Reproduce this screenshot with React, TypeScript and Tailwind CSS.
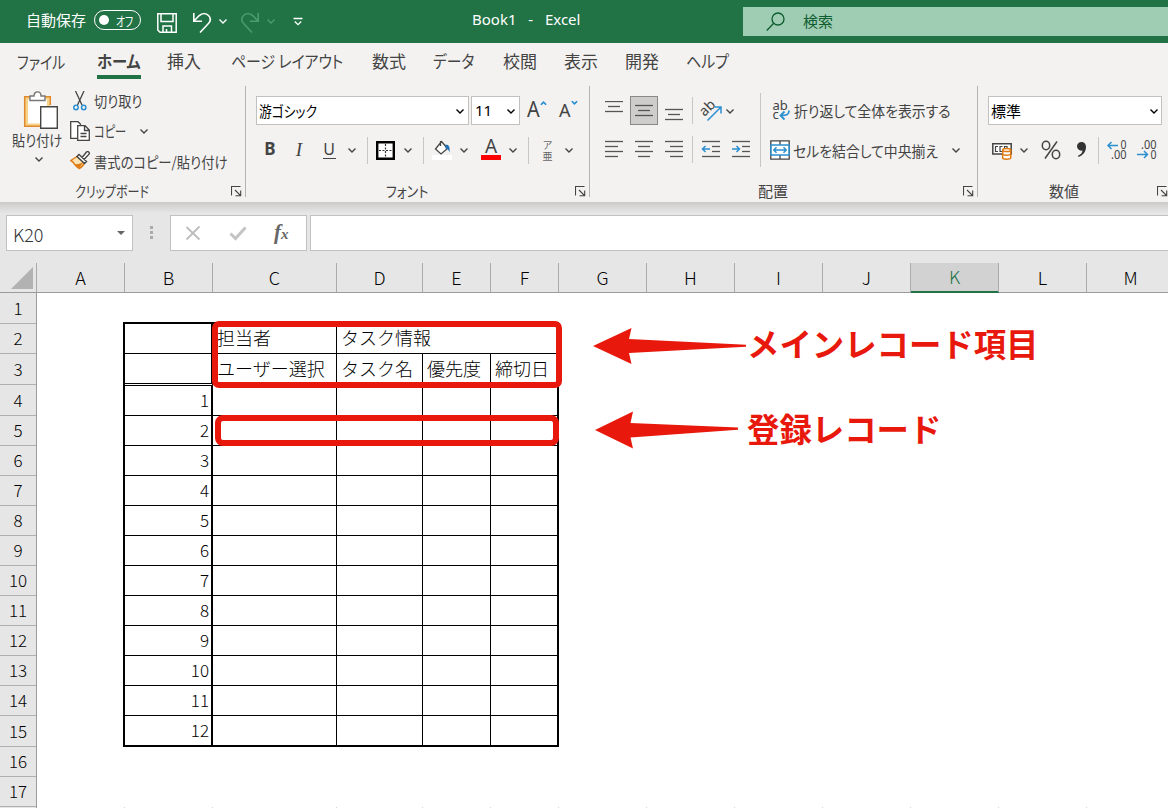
import { clsx } from 'clsx';

const columns = [
  { name: 'A', width: 'w-[88px]' },
  { name: 'B', width: 'w-[88px]' },
  { name: 'C', width: 'w-[124px]' },
  { name: 'D', width: 'w-[86px]' },
  { name: 'E', width: 'w-[68px]' },
  { name: 'F', width: 'w-[68px]' },
  { name: 'G', width: 'w-[88px]' },
  { name: 'H', width: 'w-[88px]' },
  { name: 'I', width: 'w-[88px]' },
  { name: 'J', width: 'w-[88px]' },
  { name: 'K', width: 'w-[88px]' },
  { name: 'L', width: 'w-[88px]' },
  { name: 'M', width: 'w-[88px]' },
];

const tallRows = [1, 3, 4, 15];

const tabs = [
  { name: 'ファイル', box: 'ml-[17px] w-[80px]', text: 'pt-px scale-x-[0.82]' },
  { name: 'ホーム', box: 'w-[70px]', text: 'font-bold scale-x-[0.9]', active: true },
  { name: '挿入', box: 'w-[64px]', text: '' },
  { name: 'ページ レイアウト', box: 'w-[141px]', text: 'scale-x-[0.875]' },
  { name: '数式', box: 'w-[61px]', text: '' },
  { name: 'データ', box: 'w-[70px]', text: 'scale-x-[0.87]' },
  { name: '校閲', box: 'w-[61px]', text: '' },
  { name: '表示', box: 'w-[61px]', text: '' },
  { name: '開発', box: 'w-[61px]', text: '' },
  { name: 'ヘルプ', box: 'w-[60px]', text: 'scale-x-[0.88]' },
];

function Chevron({ className = '' }: { className?: string }) {
  return (
    <svg viewBox="0 0 16 16" className={clsx('w-4 h-4 shrink-0', className)} fill="none" stroke="currentColor" strokeWidth="1.4">
      <path d="M4.5 6.5 8 10l3.5-3.5" />
    </svg>
  );
}

function Sep({ className = 'h-[27px]' }: { className?: string }) {
  return <div className={clsx('w-px bg-[#c8c6c4] shrink-0', className)} />;
}

function Launcher() {
  return (
    <svg viewBox="0 0 11 11" className="mt-[3px] w-[11px] h-[11px] shrink-0" fill="none" stroke="#444" strokeWidth="1.1">
      <path d="M.5 9.5v-9h9M4 4l5.5 5.5M9.7 4.5v5.2H4.5" />
    </svg>
  );
}

// lines: [x1, x2, y]
function Lines({ lines, children }: { lines: number[][]; children?: any }) {
  return (
    <svg viewBox="0 0 20 20" className="w-5 h-5 shrink-0" fill="none" stroke="#555" strokeWidth="1.3">
      {lines.map(([a, b, y], i) => (
        <path key={i} d={`M${a} ${y}H${b}`} />
      ))}
      {children}
    </svg>
  );
}

function TitleBar() {
  return (
    <div className="h-[43px] bg-[#217346] text-white flex items-start text-[15px] leading-none">
      <span className="ml-[26px] mt-[12px] w-[68px]">自動保存</span>
      <div className="mt-[10px] w-[47px] h-5 rounded-full border border-white flex items-center">
        <div className="ml-[4px] w-[10px] h-[10px] rounded-full bg-white" />
        <span className="ml-[7px] w-[20px] whitespace-nowrap text-[13px] origin-left scale-x-[0.75] [font-feature-settings:'palt']">オフ</span>
      </div>
      <svg viewBox="0 0 20 20" className="ml-4 mt-[13px] w-5 h-5" fill="none" stroke="white" strokeWidth="1.5">
        <path d="M.8.8h18.400v18.400H3L.8 17zM4 1v7.500h12V1M6 19v-6h8.500v6M9.500 19v-3" />
      </svg>
      <svg viewBox="0 0 20 20" className="ml-[15px] mt-[13px] w-5 h-5" fill="none" stroke="white" strokeWidth="1.6">
        <path d="M1.800 0v8.200H10M2 8l5-5.200C10 .2 14 0 16.500 2.500c2.700 2.700 2 6-.5 8.500L8 19.500" />
      </svg>
      <Chevron className="ml-[3px] mt-[13px]" />
      <svg viewBox="0 0 20 20" className="ml-[9px] mt-[13px] w-5 h-5" fill="none" stroke="#4d9a70" strokeWidth="1.6">
        <path d="M18.200 0v8.200H10M18 8l-5-5.200C10 .2 6 0 3.500 2.500c-2.700 2.700-2 6 .5 8.500L12 19.500" />
      </svg>
      <Chevron className="ml-[3px] mt-[13px] text-[#4d9a70]" />
      <svg viewBox="0 0 10 10" className="ml-[14px] mt-[17px] w-[10px] h-[10px]" fill="none" stroke="white" strokeWidth="1.3">
        <path d="M.5 1.500h9M1.800 4.500 5 7.700l3.200-3.200" />
      </svg>
      <span className="ml-[169px] mt-[12px] w-[271px] font-['Noto_Sans'] text-[15px] whitespace-pre [word-spacing:2px]">Book1  -  Excel</span>
      <div className="mt-[7px] flex-1 h-[29px] bg-[#9fcdb3] text-[#0e5c2f] flex items-center">
        <svg viewBox="0 0 20 20" className="ml-[23px] w-5 h-5" fill="none" stroke="currentColor" strokeWidth="1.3">
          <circle cx="12" cy="7" r="6" />
          <path d="M7.700 11.300.8 18.500" />
        </svg>
        <span className="ml-[17px] -mt-[2px]">検索</span>
      </div>
    </div>
  );
}

function Tabs() {
  return (
    <div className="h-[37px] flex text-[17px] leading-none text-[#444] [font-feature-settings:'palt']">
      {tabs.map((tab) => (
        <div key={tab.name} className={clsx('pt-[9px] shrink-0', tab.box)}>
          <div className={clsx('h-[18px] whitespace-nowrap origin-left', tab.text)}>{tab.name}</div>
          {tab.active && <div className="mt-[5px] w-11 h-1 bg-[#217346]" />}
        </div>
      ))}
    </div>
  );
}

function ClipboardGroup() {
  return (
    <div className="w-[245px] shrink-0">
      <div className="h-[94px] flex">
        <div className="ml-[12px] mt-[5px] w-[58px]">
          <svg viewBox="0 0 36 38" className="ml-[11px] w-9 h-[38px]" fill="none">
            <path d="M3.500 7h22v27h-22z" fill="#fff" stroke="#f8d28a" strokeWidth="3" />
            <path d="M8 5.700H1.700v29.500H18M21 5.700h6.300V14" stroke="#e08a2c" strokeWidth="1.500" />
            <path d="M7 9.500V5h4c0-5.500 7-5.500 7 0h4v4.500z" fill="#fff" stroke="#777" strokeWidth="1.400" />
            <path d="M17.700 15.700h16.600v21.600H17.700z" fill="#fff" stroke="#444" strokeWidth="1.400" />
          </svg>
          <div className="mt-[3px] whitespace-nowrap origin-left scale-x-[0.88]">貼り付け</div>
          <Chevron className="ml-[19px] mt-[4px]" />
        </div>
        <div>
          <div className="h-[30px] flex items-center">
            <svg viewBox="0 0 20 20" className="w-5 h-5" fill="none" strokeWidth="1.300">
              <path d="M5.500 0l6.500 14M14 0 7.500 14" stroke="#444" />
              <circle cx="6" cy="16.500" r="2.200" stroke="#2b8fd0" strokeWidth="1.500" />
              <circle cx="13.700" cy="16.500" r="2.200" stroke="#2b8fd0" strokeWidth="1.500" />
            </svg>
            <span className="ml-[4px] -mt-px origin-left scale-x-[0.88]">切り取り</span>
          </div>
          <div className="h-[30px] flex items-center">
            <svg viewBox="0 0 20 20" className="w-5 h-5" fill="#fff" stroke="#444" strokeWidth="1.300">
              <path d="M7 17.300H.7V.7H8l3 3" />
              <path d="M7.700 4.700H15l4.300 4.300v10.300H7.700zM14.500 5v4.500H19M10.500 12.500h6M10.500 15.500h6" />
            </svg>
            <span className="ml-[4px] -mt-px w-[42px] whitespace-nowrap origin-left scale-x-[0.75]">コピー</span>
            <Chevron />
          </div>
          <div className="h-[30px] flex items-center">
            <svg viewBox="0 0 20 20" className="w-5 h-5" fill="none" strokeWidth="1.400">
              <path d="M7 5.500.8 9.500c2 1 3 2 3.500 3.500 1.500 2 3 3.500 5 4.500 2-1 4.500-4 5-6z" fill="#fbe3b5" stroke="#e07a12" />
              <path d="M4.500 13c4 .5 6-.5 9-2l-4.500 6z" fill="#e07a12" />
              <path d="M7 5.500 9 3.500l7.500 7L14.500 12.500zM12 6.500 16.500 1c1.500-1.200 3.500.5 2.500 2.200L14 8.500" fill="#fff" stroke="#444" />
            </svg>
            <span className="ml-[4px] whitespace-nowrap origin-left scale-x-[0.887]">書式のコピー/貼り付け</span>
          </div>
        </div>
      </div>
      <div className="h-5 flex items-center">
        <span className="ml-[75px] w-[156px] origin-left scale-x-[0.8]">クリップボード</span>
        <Launcher />
      </div>
    </div>
  );
}

function FontGroup() {
  return (
    <div className="w-[343px] shrink-0 pt-[10px]">
      <div className="h-[29px] flex">
        <div className="ml-[10px] w-[213px] border border-[#c3c1bf] bg-white text-black flex items-center pl-[2px]">
          <span className="w-[195px] origin-left scale-x-[0.85]">游ゴシック</span>
          <Chevron className="-ml-px" />
        </div>
        <div className="ml-[2px] w-[49px] border border-[#c3c1bf] bg-white text-black flex items-center pl-[3px]">
          <span className="flex-1 font-['Noto_Sans'] text-[15px]">11</span>
          <Chevron />
        </div>
        <div className="ml-[7px] w-8 flex font-['Noto_Sans'] text-[22px] leading-[25px]">
          <span className="scale-x-90 origin-left">A</span>
          <svg viewBox="0 0 8 6" className="-ml-[1px] mt-[4px] w-[7px] h-[6px]" fill="none" stroke="#2b8fd0" strokeWidth="2">
            <path d="m1 5 3-3 3 3" />
          </svg>
        </div>
        <div className="w-6 flex font-['Noto_Sans'] text-[18px] leading-[28px]">
          <span>A</span>
          <svg viewBox="0 0 8 6" className="mt-[4px] w-[7px] h-[6px]" fill="none" stroke="#2b8fd0" strokeWidth="2">
            <path d="m1 1 3 3 3-3" />
          </svg>
        </div>
      </div>
      <div className="mt-[10px] h-[30px] flex items-center font-['Noto_Sans'] text-[18px]">
        <b className="ml-[10px] w-7 text-center text-[17px] -mt-[3px]">B</b>
        <i className="w-[30px] text-center font-['Liberation_Serif'] text-[19px] -mt-px">I</i>
        <div className="w-[30px] flex justify-center">
          <span className="w-[13px] h-[18px] -mt-px text-center text-[16px] leading-[16px] border-b border-[#444]">U</span>
        </div>
        <Chevron />
        <Sep className="ml-[7px] h-[27px]" />
        <svg viewBox="0 0 19 19" className="ml-2 w-[19px] h-[19px]">
          <path d="M1.200 1.200h16.600v16.600H1.200z" fill="#fff" stroke="#000" strokeWidth="2.400" />
          <path d="M9.500 3v13M3 9.500h13" stroke="#333" strokeWidth="1.200" strokeDasharray="2 1.500" />
        </svg>
        <Chevron className="ml-[5px]" />
        <Sep className="ml-[7px] h-[27px]" />
        <svg viewBox="0 0 20 20" className="ml-2 w-5 h-5" fill="none">
          <path d="M8.500 1v5M9.500 1.500 15.500 8.500 9 14 3.500 9z" fill="#fff" stroke="#444" strokeWidth="1.300" />
          <path d="M13.500 4.500c4 0 4.500 3.500 4 8-1-3-2-4-4-4z" fill="#1e6fb5" />
          <path d="M0 15h20v5H0z" fill="#fff" />
        </svg>
        <Chevron className="ml-1" />
        <div className="ml-[9px] w-5 h-5 border-b-[5px] border-[#f00] flex justify-center items-center">
          <span className="leading-none text-[19px] mb-[3px]">A</span>
        </div>
        <Chevron className="ml-1" />
        <Sep className="ml-[7px] h-[27px]" />
        <div className="ml-[11px] w-[15px] -mt-px text-[10px] leading-[11px] text-center text-[#666] font-['Noto_Sans_CJK_JP']">
          ア<br />亜
        </div>
        <Chevron className="ml-[6px]" />
      </div>
      <div className="mt-[15px] h-5 flex items-center">
        <span className="ml-[140px] w-[189px] origin-left scale-x-[0.86]">フォント</span>
        <Launcher />
      </div>
    </div>
  );
}

function AlignGroup() {
  return (
    <div className="w-[387px] shrink-0 pt-[7px]">
      <div className="h-[74px] flex">
        <div className="w-[170px] pt-[3px]">
          <div className="h-[29px] flex items-center">
            <div className="ml-[14px] w-[26px]">
              <Lines lines={[[1, 19, 0.5], [4, 16, 5.5], [1, 19, 10.5]]} />
            </div>
            <div className="w-7 h-[29px] bg-[#cfcdcb] border border-[#8a8886] flex justify-center items-center">
              <Lines lines={[[1, 19, 4.5], [4, 16, 9.5], [1, 19, 14.5]]} />
            </div>
            <div className="ml-[6px]">
              <Lines lines={[[1, 19, 8.5], [4, 16, 13.5], [1, 19, 18.5]]} />
            </div>
            <Sep className="ml-[8px] h-[27px]" />
            <svg viewBox="0 0 22 22" className="ml-[8px] w-[22px] h-[22px] overflow-visible" fill="none" stroke="#2b8fd0" strokeWidth="1.500">
              <text x="-1" y="14" transform="rotate(-45 5 10)" fontSize="14" fontFamily="Noto Sans" fill="#444" stroke="none">ab</text>
              <path d="M6.500 20.500 19.500 7.500M13.500 7h6.500v6.500" />
            </svg>
            <Chevron className="-ml-[1px]" />
          </div>
          <div className="mt-[9px] h-[30px] flex items-center">
            <div className="ml-[14px] flex gap-[10px]">
              <Lines lines={[[1, 19, 2.5], [1, 14, 7.5], [1, 19, 12.5], [1, 14, 17.5]]} />
              <Lines lines={[[1, 19, 2.5], [4, 16, 7.5], [1, 19, 12.5], [4, 16, 17.5]]} />
              <Lines lines={[[1, 19, 2.5], [6, 19, 7.5], [1, 19, 12.5], [6, 19, 17.5]]} />
            </div>
            <Sep className="ml-[8px] h-[27px]" />
            <div className="ml-[8px] flex gap-[10px]">
              <Lines lines={[[1, 19, 2.5], [11, 19, 7.5], [11, 19, 12.5], [1, 19, 17.5]]}>
                <path d="M1.500 10H9M4.500 7l-3 3 3 3" stroke="#2b8fd0" strokeWidth="1.500" />
              </Lines>
              <Lines lines={[[1, 19, 2.5], [11, 19, 7.5], [11, 19, 12.5], [1, 19, 17.5]]}>
                <path d="M1 10h7.500M5.500 7l3 3-3 3" stroke="#2b8fd0" strokeWidth="1.500" />
              </Lines>
            </div>
          </div>
        </div>
        <Sep className="h-[74px]" />
        <div className="pt-[3px]">
          <div className="h-[29px] flex items-center">
            <svg viewBox="0 0 20 20" className="ml-[11px] w-5 h-5 overflow-visible" fill="none" stroke="#2b8fd0" strokeWidth="1.800">
              <text x="0.500" y="8.500" fontSize="13" fontFamily="Noto Sans" fill="#444" stroke="none">ab</text>
              <text x="0.500" y="18" fontSize="13" fontFamily="Noto Sans" fill="#444" stroke="none">c</text>
              <path d="M17 9.500c0 4-2 5-8 5M12.500 10.500l-4 4 4 4" />
            </svg>
            <span className="ml-[2px] whitespace-nowrap origin-left scale-x-[0.925]">折り返して全体を表示する</span>
          </div>
          <div className="mt-[10px] h-[30px] flex items-center">
            <svg viewBox="0 0 20 20" className="ml-[9px] w-5 h-5" fill="none">
              <path d="M.8.800h18.400v18.400H.8zM10 1v4M10 15v4" fill="#fff" stroke="#444" strokeWidth="1.300" />
              <path d="M1 5h18v10H1z" fill="#fff" stroke="#2b8fd0" strokeWidth="1.500" />
              <path d="M4 10h12M6.500 7.300 3.800 10l2.700 2.700M13.500 7.300l2.700 2.700-2.700 2.700" stroke="#2b8fd0" strokeWidth="1.500" />
            </svg>
            <span className="ml-[3px] w-[155px] whitespace-nowrap origin-left scale-x-[0.925]">セルを結合して中央揃え</span>
            <Chevron />
          </div>
        </div>
      </div>
      <div className="mt-[13px] h-5 flex items-center">
        <span className="ml-[168px] w-[205px]">配置</span>
        <Launcher />
      </div>
    </div>
  );
}

function NumberGroup() {
  return (
    <div className="w-[190px] shrink-0 pt-[10px]">
      <div className="ml-[10px] w-[174px] h-[29px] border border-[#c3c1bf] bg-white text-black flex items-center pl-[2px]">
        <span className="flex-1">標準</span>
        <Chevron className="-mr-[1px]" />
      </div>
      <div className="mt-[10px] h-[30px] flex items-center">
        <svg viewBox="0 0 20 20" className="ml-[14px] w-5 h-5" fill="none" stroke="#444" strokeWidth="1.500">
          <path d="M.8 3.800h18.400V14H.8z" fill="#fff" />
          <path d="M6 6.500H3.500v5H6M10.500 6.500H8v5h2M12.500 8.500v-2H15v2" strokeWidth="1.200" />
          <path d="M10.700 10v8c0 1.600 8 1.600 8 0v-8" fill="#fff" stroke="#e07a12" />
          <ellipse cx="14.700" cy="10" rx="4" ry="1.600" fill="#fff" stroke="#e07a12" />
          <path d="M10.700 14c0 1.600 8 1.600 8 0" stroke="#e07a12" />
        </svg>
        <Chevron className="ml-[4px]" />
        <svg viewBox="0 0 20 20" className="ml-[9px] w-5 h-5" fill="none" stroke="#444" strokeWidth="1.500">
          <ellipse cx="5" cy="5.500" rx="3.700" ry="4.200" />
          <ellipse cx="15" cy="14.500" rx="3.700" ry="4.200" />
          <path d="M16 1.500 4 18.500" />
        </svg>
        <svg viewBox="0 0 12 18" className="ml-[15px] w-3 h-[18px]" fill="#333">
          <path d="M5.500 1C8.500 1 10 3.300 10 6c0 4.500-3 8.500-7.500 10l-.5-1.200c2.500-1 4.300-3 4.500-5.300C3.500 10.300 1 8 1 5.300 1 2.800 3 1 5.500 1z" />
        </svg>
        <Sep className="ml-[10px] h-[27px]" />
        <svg viewBox="0 0 20 20" className="ml-[8px] w-5 h-5 overflow-visible" fill="none" stroke="#2b8fd0" strokeWidth="1.500">
          <text x="13.500" y="9" fontSize="12" textLength="6" lengthAdjust="spacingAndGlyphs" fontFamily="Noto Sans" fill="#444" stroke="none">0</text>
          <text x="4" y="19" fontSize="12" textLength="15.500" lengthAdjust="spacingAndGlyphs" fontFamily="Noto Sans" fill="#444" stroke="none">.00</text>
          <path d="M1 5.500h10M4.500 2 1 5.500 4.500 9" />
        </svg>
        <svg viewBox="0 0 20 20" className="ml-[10px] w-5 h-5 overflow-visible" fill="none" stroke="#2b8fd0" strokeWidth="1.500">
          <text x="4" y="9" fontSize="12" textLength="15.500" lengthAdjust="spacingAndGlyphs" fontFamily="Noto Sans" fill="#444" stroke="none">.00</text>
          <text x="13.500" y="19" fontSize="12" textLength="6" lengthAdjust="spacingAndGlyphs" fontFamily="Noto Sans" fill="#444" stroke="none">0</text>
          <path d="M0 14.500h10.500M7 11l3.500 3.500L7 18" />
        </svg>
      </div>
      <div className="mt-[15px] h-5 flex items-center">
        <span className="ml-[71px] w-[108px]">数値</span>
        <Launcher />
      </div>
    </div>
  );
}

function Ribbon() {
  const line = <div className="w-px h-[111px] bg-[#b5b3b1] shrink-0" />;
  return (
    <div className="h-[122px] pt-[6px] flex text-[15px] leading-none text-[#444] [font-feature-settings:'palt']">
      <ClipboardGroup />
      {line}
      <FontGroup />
      {line}
      <AlignGroup />
      {line}
      <NumberGroup />
    </div>
  );
}

function FormulaBar() {
  return (
    <div className="h-[61px] border-t-2 border-[#cfcdcb] bg-linear-to-b from-[#d2d0ce] to-[#e6e6e6] to-[9px] pt-[11px] flex">
      <div className="ml-[6px] w-[127px] h-9 bg-white border border-[#c3c1bf] flex items-center">
        <span className="ml-[6px] flex-1 pt-[2px] text-[18px] leading-none font-light text-[#333]">K20</span>
        <div className="mr-[7px] border-x-4 border-x-transparent border-t-4 border-t-[#666]" />
      </div>
      <div className="ml-[17px] mt-[11px] flex flex-col gap-[2px]">
        <div className="w-[3px] h-[3px] bg-[#aaa]" />
        <div className="w-[3px] h-[3px] bg-[#aaa]" />
        <div className="w-[3px] h-[3px] bg-[#aaa]" />
      </div>
      <div className="ml-[17px] w-[137px] h-9 bg-white border border-[#c3c1bf] flex items-center">
        <svg viewBox="0 0 16 16" className="ml-[14px] w-4 h-4" fill="none" stroke="#bdbdbd" strokeWidth="1.800">
          <path d="m1.500 2 13 12.500M14.500 1.500l-13 13" />
        </svg>
        <svg viewBox="0 0 18 16" className="ml-[28px] w-[18px] h-4" fill="none" stroke="#c4c4c4" strokeWidth="3">
          <path d="m1.500 8.500 5 5L16.500 2.500" />
        </svg>
        <span className="ml-[27px] -mt-[2px] font-['Liberation_Serif'] italic font-bold text-[21px] leading-none text-[#666]">
          f<span className="text-[15px]">x</span>
        </span>
      </div>
      <div className="ml-[3px] flex-1 h-9 bg-white border border-r-0 border-[#c3c1bf]" />
    </div>
  );
}

function ColumnHeader() {
  return (
    <div className="h-[30px] flex text-[18px] leading-none font-light text-black border-b border-[#9b9b9b]">
      <div className="w-[37px] h-full shrink-0 border-r border-[#aaa] flex justify-end items-end pr-[3px] pb-[3px]">
        <svg viewBox="0 0 22 22" className="w-[22px] h-[22px]" fill="#b2b2b2">
          <path d="M22 0v22H0z" />
        </svg>
      </div>
      {columns.map((col) => (
        <div
          key={col.name}
          className={clsx(
            'shrink-0 border-r border-[#ababab] flex justify-center items-center pb-[2px]',
            col.width,
            col.name === 'K' ? 'h-[30px] bg-[#d2d2d2] text-[#217346] border-b-2 border-b-[#217346]' : 'h-full'
          )}>
          {col.name}
        </div>
      ))}
    </div>
  );
}

function RowHeader() {
  return (
    <div className="w-[37px] shrink-0 bg-[#e6e6e6] border-r border-[#9b9b9b] text-[17px] leading-none font-light text-black">
      {Array.from({ length: 17 }, (_, i) => i + 1).map((n) => (
        <div
          key={n}
          className={clsx(
            'border-b border-[#b0b0b0] flex justify-center items-center pb-[2px]',
            tallRows.includes(n) ? 'h-[31px]' : 'h-[30px]'
          )}>
          {n}
        </div>
      ))}
    </div>
  );
}

const cell = 'shrink-0 border-black pl-[4px] pb-[3px] flex items-center whitespace-nowrap';

function Sheet() {
  return (
    <div className="w-[522px] relative text-[18px] leading-none font-light text-black">
      <div className="h-[31px] flex">
        <div className="ml-[86px] w-[436px] border-b-2 border-black" />
      </div>
      <div className="h-[30px] flex">
        <div className={clsx(cell, 'w-[88px] border-r-2')} />
        <div className={clsx(cell, 'w-[88px] border-r-2 border-b')} />
        <div className={clsx(cell, 'w-[124px] border-r border-b')}>担当者</div>
        <div className={clsx(cell, 'w-[222px] border-r-2 border-b')}>タスク情報</div>
      </div>
      <div className="h-8 flex">
        <div className={clsx(cell, 'w-[88px] border-r-2')} />
        <div className={clsx(cell, 'w-[88px] border-r-2 border-b-[3px] [border-bottom-style:double]')} />
        <div className={clsx(cell, 'w-[124px] border-r pb-[5px]')}>ユーザー選択</div>
        <div className={clsx(cell, 'w-[86px] border-r pb-[5px]')}>タスク名</div>
        <div className={clsx(cell, 'w-[68px] border-r pb-[5px]')}>優先度</div>
        <div className={clsx(cell, 'w-[68px] border-r-2 pb-[5px]')}>締切日</div>
      </div>
      {Array.from({ length: 12 }, (_, i) => i + 1).map((n) => (
        <div key={n} className={clsx('flex', n === 12 ? 'h-[31px]' : 'h-[30px]')}>
          <div className={clsx(cell, 'w-[88px] border-r-2')} />
          <div className={clsx(cell, 'w-[88px] border-r-2 justify-end pr-[2px] text-[17px]', n === 12 ? 'border-b-2' : 'border-b')}>
            {n}
          </div>
          <div className={clsx(cell, 'w-[124px] border-r', n === 12 ? 'border-b-2' : 'border-b')} />
          <div className={clsx(cell, 'w-[86px] border-r', n === 12 ? 'border-b-2' : 'border-b')} />
          <div className={clsx(cell, 'w-[68px] border-r', n === 12 ? 'border-b-2' : 'border-b')} />
          <div className={clsx(cell, 'w-[68px] border-r-2', n === 12 ? 'border-b-2' : 'border-b')} />
        </div>
      ))}
      <div className="mt-[60px] h-px flex">
        {columns.map((col) => (
          <div key={col.name} className={clsx('shrink-0 border-r border-[#d4d4d4]', col.width)} />
        ))}
      </div>

      {/* highlights over the cells */}
      <div className="absolute left-[175px] top-[28px] w-[350px] h-[67px] border-[6px] border-[#e8190c] rounded-[7px]" />
      <div className="absolute left-[178px] top-[122px] w-[344px] h-[31px] border-[6px] border-[#e8190c] rounded-[8px]" />
    </div>
  );
}

function Notes() {
  return (
    <div className="ml-[34px] pt-[34px] text-[32.4px] leading-none font-bold text-[#e8190c]">
      <div className="h-[84px] flex">
        <svg viewBox="0 0 153 38" className="w-[153px] h-[38px]" fill="currentColor">
          <path d="M0 19 38.500 1 36 12l117 5.700v2.100L36 26l2.500 11z" />
        </svg>
        <span className="ml-[1px] whitespace-nowrap">メインレコード項目</span>
      </div>
      <div className="flex">
        <svg viewBox="0 0 153 38" className="w-[153px] h-[38px]" fill="currentColor">
          <path d="M2 19 40 0.500 37.500 12l107.500 4.500v2.200L37.500 26.500 40 37.500z" />
        </svg>
        <span className="ml-[1px] mt-px whitespace-nowrap">登録レコード</span>
      </div>
    </div>
  );
}

export default function App() {
  return (
    <div className="w-[1168px] h-[808px] overflow-hidden bg-[#f3f2f1] font-['Noto_Sans_CJK_JP',sans-serif]">
      <TitleBar />
      <Tabs />
      <Ribbon />
      <div className="bg-[#e6e6e6]">
        <FormulaBar />
        <ColumnHeader />
      </div>
      <div className="h-[515px] bg-white flex">
        <RowHeader />
        <Sheet />
        <Notes />
      </div>
    </div>
  );
}
